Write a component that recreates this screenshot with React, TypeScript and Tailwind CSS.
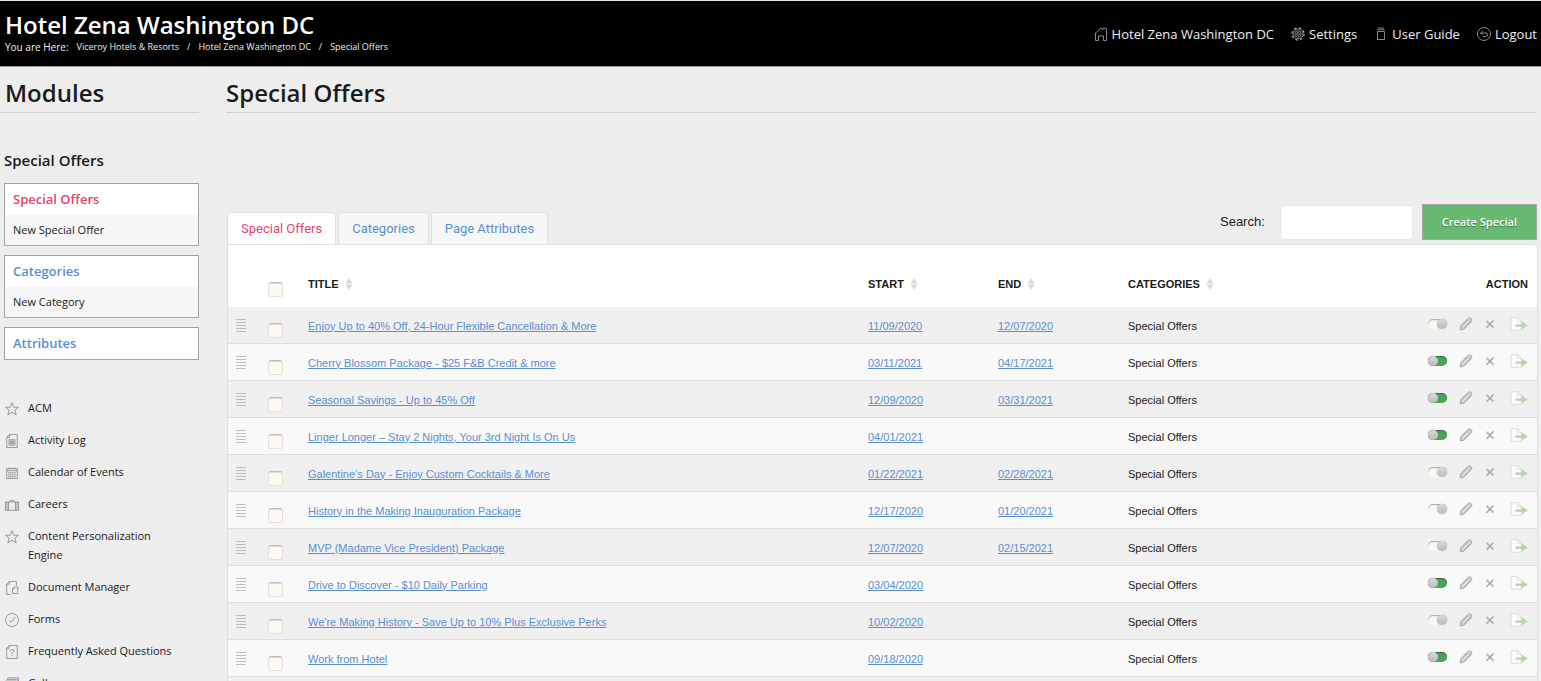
import type { ReactNode } from "react";

type Offer = { title: string; start: string; end: string; live: boolean };

const offers: Offer[] = [
  { title: "Enjoy Up to 40% Off, 24-Hour Flexible Cancellation & More", start: "11/09/2020", end: "12/07/2020", live: false },
  { title: "Cherry Blossom Package - $25 F&B Credit & more", start: "03/11/2021", end: "04/17/2021", live: true },
  { title: "Seasonal Savings - Up to 45% Off", start: "12/09/2020", end: "03/31/2021", live: true },
  { title: "Linger Longer – Stay 2 Nights, Your 3rd Night Is On Us", start: "04/01/2021", end: "", live: true },
  { title: "Galentine’s Day - Enjoy Custom Cocktails & More", start: "01/22/2021", end: "02/28/2021", live: false },
  { title: "History in the Making Inauguration Package", start: "12/17/2020", end: "01/20/2021", live: false },
  { title: "MVP (Madame Vice President) Package", start: "12/07/2020", end: "02/15/2021", live: false },
  { title: "Drive to Discover - $10 Daily Parking", start: "03/04/2020", end: "", live: true },
  { title: "We're Making History - Save Up to 10% Plus Exclusive Perks", start: "10/02/2020", end: "", live: false },
  { title: "Work from Hotel", start: "09/18/2020", end: "", live: true },
];

function Icon({ children, className = "" }: { children: ReactNode; className?: string }) {
  return (
    <svg viewBox="0 0 14 14" fill="none" stroke="currentColor" strokeWidth="0.8" aria-hidden="true" className={`size-[14px] shrink-0 ${className}`}>
      {children}
    </svg>
  );
}

const HomeIcon = () => (
  <Icon>
    <path d="M1.5 13.5h3V9h5v4.5h3V4.5l.9.9M1.5 13.5V6.2L.5 7M1.5 6.2 7 .9l2 1.7V1.2h3.2v3.3" />
  </Icon>
);
const GearIcon = () => (
  <Icon>
    <circle cx="7" cy="7" r="5" />
    <circle cx="7" cy="7" r="3.2" />
    <circle cx="7" cy="7" r="1.4" />
    <circle cx="7" cy="7" r="6.1" strokeWidth="1.2" strokeDasharray="2.4 2.39" />
  </Icon>
);
const GuideIcon = () => (
  <Icon>
    <path d="M4 1h6M3.5 2.7h7M3.5 4.5h7v8h-7z" />
  </Icon>
);
const LogoutIcon = () => (
  <Icon>
    <circle cx="7" cy="7" r="6.5" />
    <path d="M5.8 4 3.6 6l2.2 2M3.8 6h5a1.7 1.7 0 0 1 0 3.5H6" />
  </Icon>
);
const StarIcon = () => (
  <Icon>
    <path d="m7 .7 1.7 4.5h4.9L9.8 8.2l1.4 4.8L7 10.2 2.8 13l1.4-4.8L.4 5.2h4.9z" />
  </Icon>
);
const LogIcon = () => (
  <Icon>
    <path d="M4.5.5h7.8v13H1.7V3.3zM4.5.5v2.8H1.7M4 5.7h6v5.5H4zM5.3 7h3.4v2.8H5.3zM5.3 7l3.4 2.8M8.7 7 5.3 9.8" />
  </Icon>
);
const CalendarIcon = () => (
  <Icon>
    <path d="M1.7 2.5h10.6v10H1.7zM1.7 4.7h10.6M4 1.5v2M7 1.5v2M10 1.5v2" />
    <path d="M3.3 6.7h7.4M3.3 8.7h7.4M3.3 10.7h7.4" strokeWidth="1.2" strokeDasharray="1.2 .8" />
  </Icon>
);
const CaseIcon = () => (
  <Icon>
    <path d="M.5 4h13v8.3H.5zM2 4v8.3M3.5 4v8.3M10.5 4v8.3M12 4v8.3M5 4V2.6h4V4" />
  </Icon>
);
const DocumentIcon = () => (
  <Icon>
    <path d="M5.5 13.5H1.7V3.2L4.4.5h7v4.3M4.4.5v2.7H1.7M9.3 6h3.5v6.5H7.5V7.9zM9.3 6v1.9H7.5" />
  </Icon>
);
const CheckIcon = () => (
  <Icon>
    <circle cx="7" cy="7" r="6.5" />
    <path d="m4.2 7 2 2.2 4-5" />
  </Icon>
);
const QuestionIcon = () => (
  <Icon>
    <path d="M4.3.5h8v13H1.7V3.2zM4.3.5v2.7H1.7M5.2 6.2c0-2.2 3.7-2.2 3.7-.2 0 1.4-1.9 1.2-1.9 3M7 10.2v1" />
  </Icon>
);
const GalleryIcon = () => (
  <Icon>
    <path d="M3 .8h10.5v8M1.8 2.4h10.4v8M.5 4h10.4v8.5H.5zM3 .8 1.8 2.4" />
  </Icon>
);

const modules: { label: string; icon: ReactNode }[] = [
  { label: "ACM", icon: <StarIcon /> },
  { label: "Activity Log", icon: <LogIcon /> },
  { label: "Calendar of Events", icon: <CalendarIcon /> },
  { label: "Careers", icon: <CaseIcon /> },
  { label: "Content Personalization Engine", icon: <StarIcon /> },
  { label: "Document Manager", icon: <DocumentIcon /> },
  { label: "Forms", icon: <CheckIcon /> },
  { label: "Frequently Asked Questions", icon: <QuestionIcon /> },
  { label: "Gallery", icon: <GalleryIcon /> },
];

const topLinks: { label: string; icon: ReactNode }[] = [
  { label: "Hotel Zena Washington DC", icon: <HomeIcon /> },
  { label: "Settings", icon: <GearIcon /> },
  { label: "User Guide", icon: <GuideIcon /> },
  { label: "Logout", icon: <LogoutIcon /> },
];

function Header() {
  return (
    <header className="flex items-start justify-between border-t border-b border-t-[#dfe3e3] border-b-[#999] bg-black pr-1 pl-[5px] text-[#eee]">
      <div className="pt-2 pb-[13px]">
        <h1 className="text-2xl leading-8 font-semibold text-white">Hotel Zena Washington DC</h1>
        <nav aria-label="Breadcrumb" className="flex items-center gap-2 text-[9px] leading-3">
          <span className="text-[10px]">You are Here:</span>
          <a href="#">Viceroy Hotels &amp; Resorts</a>
          <span>/</span>
          <a href="#">Hotel Zena Washington DC</a>
          <span>/</span>
          <a href="#">Special Offers</a>
        </nav>
      </div>
      <nav aria-label="Account" className="flex gap-[17px] pt-[23px] text-[13px] leading-5">
        {topLinks.map((l) => (
          <a key={l.label} href="#" className="flex items-center gap-1">
            <span className="text-[#aaa]">{l.icon}</span>
            {l.label}
          </a>
        ))}
      </nav>
    </header>
  );
}

function SideBox({ title, sub, active }: { title: string; sub?: string; active?: boolean }) {
  return (
    <div className="border border-[#a3a3a3] bg-white">
      <a href="#" className={`block px-2 text-[13px] leading-[31px] font-semibold ${active ? "text-[#e7446d]" : "text-[#5a8fd3]"}`}>
        {title}
      </a>
      {sub && (
        <a href="#" className="block bg-[#f6f6f6] px-2 text-[11px] leading-[30px] text-[#222]">
          {sub}
        </a>
      )}
    </div>
  );
}

function Sidebar() {
  return (
    <aside className="w-[199px] shrink-0">
      <h2 className="border-b border-[#cdcfd2] pt-[10px] pb-[3px] pl-[5px] text-2xl leading-8 font-semibold">Modules</h2>
      <div className="pl-1">
        <h3 className="pt-[37px] pb-3 text-[15px] leading-[21px] font-semibold">Special Offers</h3>
        <div className="flex flex-col gap-[9px]">
          <SideBox title="Special Offers" sub="New Special Offer" active />
          <SideBox title="Categories" sub="New Category" />
          <SideBox title="Attributes" />
        </div>
        <ul className="mt-[38px] flex flex-col gap-[13px] text-[11px] leading-[19px]">
          {modules.map((m) => (
            <li key={m.label}>
              <a href="#" className="flex gap-[9px] pr-6 pl-px">
                <span className="pt-1 text-[#858585]">{m.icon}</span>
                {m.label}
              </a>
            </li>
          ))}
        </ul>
      </div>
    </aside>
  );
}

function SortHead({ label }: { label: string }) {
  return (
    <button type="button" className="flex items-center gap-[6px] font-bold">
      {label}
      <svg viewBox="0 0 8 12" className="h-3 w-2" fill="#d9d9d9" aria-hidden="true">
        <path d="M4 0 7.5 5.4H.5zM.5 6.6h7L4 12z" />
      </svg>
    </button>
  );
}

function Tick({ label }: { label: string }) {
  return (
    <input
      type="checkbox"
      aria-label={label}
      className="block size-[15px] appearance-none rounded-[3px] border border-[#e3e1dc] border-t-[#bcbcbc] bg-[#fdf9f1] shadow-[inset_0_1px_0_#dedbd5]"
    />
  );
}

function Toggle({ on }: { on: boolean }) {
  const track = on
    ? "justify-start bg-[#4da25a] shadow-[inset_0_1px_1px_#3b6e44]"
    : "justify-end bg-[#fbf8f1] shadow-[inset_0_1px_1px_#a9a7a2]";
  return (
    <button type="button" role="switch" aria-checked={on} aria-label="Published" className={`flex h-[10px] w-[19px] items-center rounded-full ${track}`}>
      <span className="size-[10px] rounded-full bg-linear-to-b from-[#dadada] to-[#bababa] shadow-[0_0_1px_#777]" />
    </button>
  );
}

function RowActions({ on }: { on: boolean }) {
  return (
    <div className="flex items-center justify-end pb-[3px]">
      <Toggle on={on} />
      <button type="button" aria-label="Edit" className="ml-3">
        <svg viewBox="0 0 14 14" className="size-[14px]" fill="none" aria-hidden="true">
          <path d="M1.2 12.8 1.6 9l7.2-7.4a2.3 2.3 0 0 1 3.4 3.2l-7.3 7.4z" fill="#d0d0d0" stroke="#a8a8a8" strokeWidth="1" />
          <path d="m4 10 5.2-5.4" stroke="#f2f2f2" strokeWidth="1" />
          <path d="m3 8.6 5.4-5.6M5.4 11l5.8-6" stroke="#aaa" strokeWidth=".8" />
        </svg>
      </button>
      <button type="button" aria-label="Delete" className="ml-3">
        <svg viewBox="0 0 10 10" className="size-[10px]" fill="none" aria-hidden="true">
          <path d="m1.5 2 7 6.4" stroke="#b8b8b8" strokeWidth="2" />
          <path d="M8.5 1.5 1.5 8.7" stroke="#a2a2a2" strokeWidth="1.4" />
        </svg>
      </button>
      <button type="button" aria-label="Export" className="ml-[15px]">
        <svg viewBox="0 0 18 14" className="h-[14px] w-[18px]" fill="none" aria-hidden="true">
          <path d="M1 .7h6.5l3.8 3.7v8.8H1z" fill="#fbfbfb" stroke="#d5d5d5" strokeWidth=".8" />
          <path d="M7.5.7v3.7h3.8" stroke="#dedede" strokeWidth=".8" />
          <path d="M5.5 7.5h6.8L11 4l6.8 4.4L11 13l1.3-3.3H5.5z" fill="#b7d3aa" />
        </svg>
      </button>
    </div>
  );
}

function OffersTable() {
  return (
    <div className="ml-px rounded-tr-sm border border-[#dcdfe4] bg-white font-['Liberation_Sans',Arial,sans-serif]">
      <table className="w-full table-fixed border-collapse text-left text-[11px] leading-4">
        <colgroup>
          <col className="w-10" />
          <col className="w-10" />
          <col />
          <col className="w-[130px]" />
          <col className="w-[130px]" />
          <col className="w-[293px]" />
          <col className="w-[116px]" />
        </colgroup>
        <thead>
          <tr className="h-[62px]">
            <td />
            <td className="pt-[27px]"><Tick label="Select all offers" /></td>
            <th className="pt-4"><SortHead label="TITLE" /></th>
            <th className="pt-4"><SortHead label="START" /></th>
            <th className="pt-4"><SortHead label="END" /></th>
            <th className="pt-4"><SortHead label="CATEGORIES" /></th>
            <th className="pt-4 pr-[9px] text-right">ACTION</th>
          </tr>
        </thead>
        <tbody>
          {offers.concat({ title: "", start: "", end: "", live: false }).map((o, i) => (
            <tr key={i} className="h-[37px] shadow-[inset_0_-1px_0_#dfdfdf] odd:bg-[#f0f0f0] even:bg-[#f9f9f9]">
              {o.title && (
                <>
                  <td className="pl-2">
                    <svg viewBox="0 0 10 13" className="h-[13px] w-[10px]" stroke="#bdbdbd" aria-hidden="true">
                      <path d="M0 .5h10M0 3.5h10M0 6.5h10M0 9.5h10M0 12.5h10" />
                    </svg>
                  </td>
                  <td className="pt-[9px]"><Tick label={`Select ${o.title}`} /></td>
                  <td><a href="#" className="text-[#5a8fd3] underline">{o.title}</a></td>
                  <td><a href="#" className="text-[#5a8fd3] underline">{o.start}</a></td>
                  <td>{o.end && <a href="#" className="text-[#5a8fd3] underline">{o.end}</a>}</td>
                  <td>Special Offers</td>
                  <td className="pr-[9px]"><RowActions on={o.live} /></td>
                </>
              )}
              {!o.title && <td colSpan={7} />}
            </tr>
          ))}
        </tbody>
      </table>
    </div>
  );
}

const tabs = ["Special Offers", "Categories", "Page Attributes"];

export default function App() {
  return (
    <div className="h-screen overflow-hidden bg-[#eee] font-['Open_Sans',sans-serif] text-[#1b1b1b]">
      <Header />
      <div className="flex gap-[27px] pr-[3px]">
        <Sidebar />
        <main className="min-w-0 flex-1">
          <h2 className="mr-0.5 border-b border-[#cdcfd2] pt-[10px] pb-[3px] text-2xl leading-8 font-semibold">Special Offers</h2>
          <div className="mt-[91px] flex items-end justify-between font-['Liberation_Sans',Arial,sans-serif]">
            <div role="tablist" className="ml-px flex gap-0.5 font-[Roboto,sans-serif] text-[13px]">
              {tabs.map((t, i) => (
                <button
                  key={t}
                  type="button"
                  role="tab"
                  aria-selected={i === 0}
                  className={`h-8 rounded-t-sm border border-b-0 border-[#dcdfe4] px-[13px] ${i === 0 ? "bg-white text-[#e7446d]" : "bg-[#f7f7f7] text-[#5a8fd3]"}`}
                >
                  {t}
                </button>
              ))}
            </div>
            <div className="mr-px flex items-center pb-1">
              <label htmlFor="search" className="mr-[15px] text-[13px]">Search:</label>
              <input id="search" type="text" className="mr-[9px] h-[35px] w-[133px] rounded-sm border border-[#e6e6e6] bg-white px-2 text-xs" />
              <button type="button" className="h-[36px] border border-[#a3a8ad] bg-[#67b972] px-[19px] font-['Open_Sans',sans-serif] text-[11px] font-semibold text-white [text-shadow:0_1px_1px_#3b7a44]">
                Create Special
              </button>
            </div>
          </div>
          <OffersTable />
        </main>
      </div>
    </div>
  );
}
